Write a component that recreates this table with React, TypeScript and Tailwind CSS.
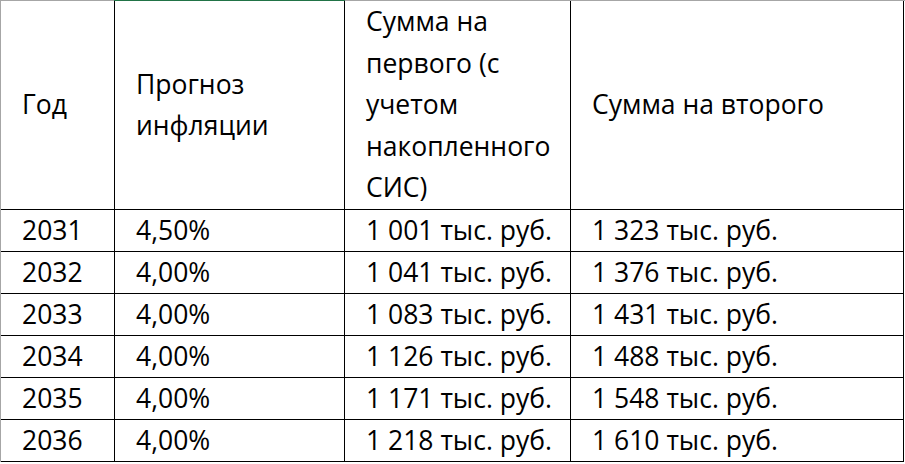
import React from "react";

type Row = { year: string; inflation: string; first: string; second: string };

const rows: Row[] = [
  { year: "2031", inflation: "4,50%", first: "1 001 тыс. руб.", second: "1 323 тыс. руб." },
  { year: "2032", inflation: "4,00%", first: "1 041 тыс. руб.", second: "1 376 тыс. руб." },
  { year: "2033", inflation: "4,00%", first: "1 083 тыс. руб.", second: "1 431 тыс. руб." },
  { year: "2034", inflation: "4,00%", first: "1 126 тыс. руб.", second: "1 488 тыс. руб." },
  { year: "2035", inflation: "4,00%", first: "1 171 тыс. руб.", second: "1 548 тыс. руб." },
  { year: "2036", inflation: "4,00%", first: "1 218 тыс. руб.", second: "1 610 тыс. руб." },
];

const cell = "flex items-center border-r border-b border-black pl-[21px]";

/** Spreadsheet-like table of inflation forecast */
export default function App() {
  return (
    <div
      className="h-[464px] w-[905px] overflow-hidden bg-white text-[26.5px] text-black"
      style={{ fontFamily: '"Open Sans", "Noto Sans", sans-serif' }}
    >
      {/* top gridline, green over the selected column */}
      <div className="flex h-px">
        <div className="w-[114px] bg-[#a6a6a6]" />
        <div className="w-[231px] bg-[#217346]" />
        <div className="flex-1 bg-[#a6a6a6]" />
      </div>

      <div className="grid grid-cols-[114px_230px_226px_333px] border-l border-[#a6a6a6] leading-[41.5px]">
        {/* Header */}
        <div className={`${cell} h-[209px]`}>Год</div>
        <div className={`${cell} h-[209px]`}>
          <div>
            Прогноз
            <br />
            инфляции
          </div>
        </div>
        <div className={`${cell} h-[209px]`}>
          <div>
            Сумма на
            <br />
            первого (с
            <br />
            учетом
            <br />
            накопленного
            <br />
            СИС)
          </div>
        </div>
        <div className={`${cell} h-[209px]`}>Сумма на второго</div>

        {/* Rows */}
        {rows.map((r) => (
          <React.Fragment key={r.year}>
            <div className={`${cell} h-[42px]`}>{r.year}</div>
            <div className={`${cell} h-[42px]`}>{r.inflation}</div>
            <div className={`${cell} h-[42px]`}>{r.first}</div>
            <div className={`${cell} h-[42px]`}>{r.second}</div>
          </React.Fragment>
        ))}
      </div>
    </div>
  );
}
